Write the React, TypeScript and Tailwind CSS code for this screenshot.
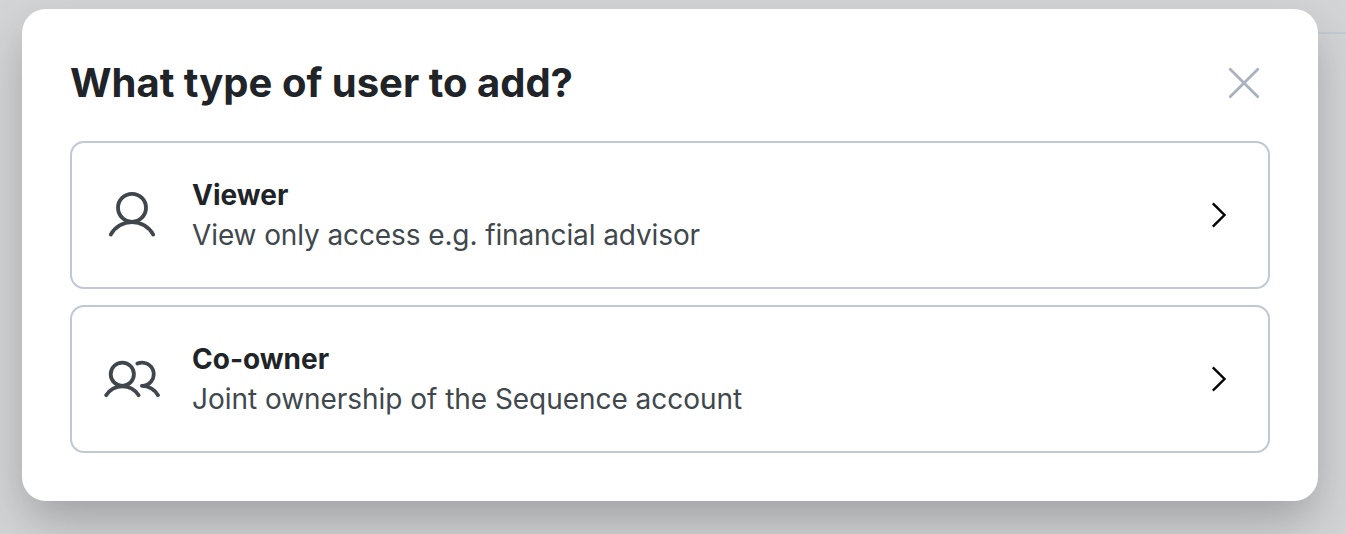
import React from 'react';

const ViewerIcon = () => (
  <svg width="56" height="56" viewBox="0 0 56 56" fill="none" stroke="#3f464c" strokeWidth="3.8" strokeLinecap="round">
    <circle cx="28" cy="20.8" r="14" />
    <path d="M6.8 47.6A24.2 24.2 0 0 1 49.2 47.6" />
  </svg>
);

const CoOwnerIcon = () => (
  <svg width="56" height="56" viewBox="0 0 56 56" fill="none" stroke="#3f464c" strokeWidth="3.8" strokeLinecap="round" strokeLinejoin="round">
    <circle cx="18.3" cy="23.2" r="11.6" />
    <path d="M2.2 44.2A19.2 19.2 0 0 1 34.6 44.2" />
    <path d="M33.4 12.6A11.6 11.6 0 1 1 37.8 34.8A19.2 19.2 0 0 1 54 44.2" />
  </svg>
);

const UserTypeModal = () => {
  const userTypes = [
    {
      id: 1,
      title: 'Viewer',
      description: 'View only access e.g. financial advisor',
      tracking: 'tracking-[-0.11px]',
      icon: <ViewerIcon />,
    },
    {
      id: 2,
      title: 'Co-owner',
      description: 'Joint ownership of the Sequence account',
      tracking: 'tracking-[-0.04px]',
      icon: <CoOwnerIcon />,
    },
  ];

  return (
    <div className="relative h-[534px] overflow-hidden bg-[#d3d4d6] pt-[9px] pr-7 pl-[22px] font-['Inter',sans-serif]">
      {/* page divider behind the modal */}
      <div className="absolute top-8 right-0 h-0.5 w-20 bg-[#c5cbd2]" />
      <div className="relative h-[492px] rounded-3xl bg-white px-12 pt-11 shadow-[0_22px_48px_-4px_rgba(0,0,0,0.25)]">
        <div className="flex h-[60px] items-center justify-between">
          <h1 className="text-[40px] font-bold text-[#202428]">What type of user to add?</h1>
          <button aria-label="Close" className="mr-2.5">
            <svg width="32" height="32" viewBox="0 0 32 32" fill="none" stroke="#a9b3c0" strokeWidth="2.8" strokeLinecap="round">
              <path d="M2.2 2.2 29.8 29.8M29.8 2.2 2.2 29.8" />
            </svg>
          </button>
        </div>
        <div className="mt-7 flex flex-col gap-4">
          {userTypes.map((type) => (
            <button key={type.id} className="flex h-[148px] items-center rounded-[14px] border-2 border-[#bfc8d4] pr-10 pl-8 text-left">
              {type.icon}
              <div className="ml-8 flex-1 text-[28px] leading-10">
                <h2 className="font-bold text-[#202428]">{type.title}</h2>
                <p className={`text-[#40474d] ${type.tracking}`}>{type.description}</p>
              </div>
              <svg width="18" height="28" viewBox="0 0 18 28" fill="none" stroke="#000" strokeWidth="2.4">
                <path d="M2.8 2.3 14.5 14 2.8 25.7" />
              </svg>
            </button>
          ))}
        </div>
      </div>
    </div>
  );
};

export default UserTypeModal;
